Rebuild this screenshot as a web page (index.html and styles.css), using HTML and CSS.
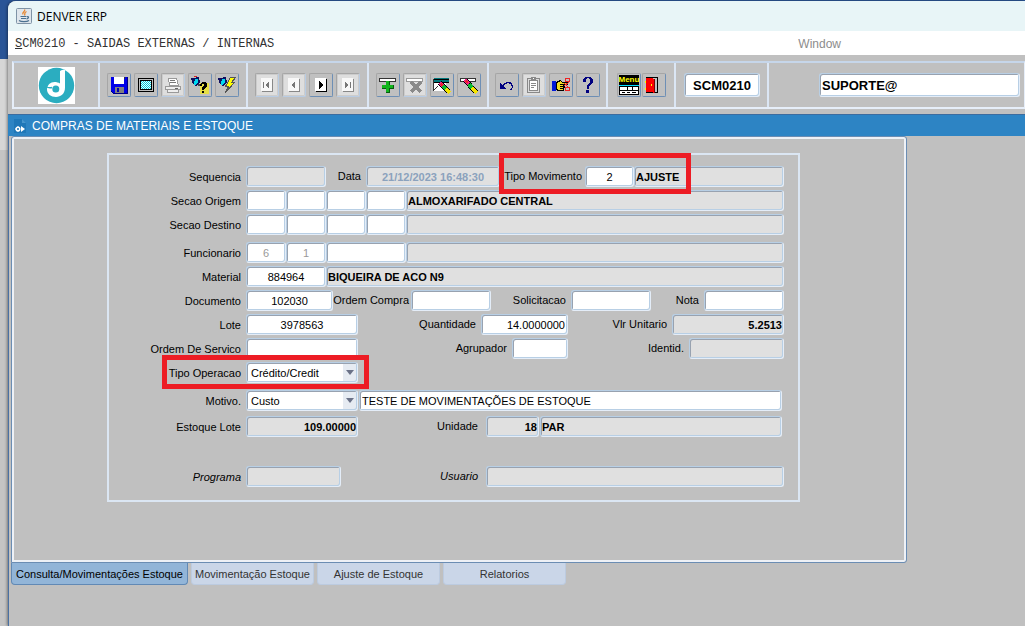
FILE: index.html
```html
<!DOCTYPE html>
<html lang="pt-BR">
<head>
    <meta charset="UTF-8">
    <meta name="viewport" content="width=device-width, initial-scale=1.0">
    <title>DENVER ERP</title>
    <link rel="stylesheet" href="styles.css">
</head>
<body>

    <div class="window">
        <header class="titlebar">
            <svg class="java" width="16" height="16" viewBox="0 0 16 16">
                <rect x="0.5" y="0.5" width="15" height="15" rx="1" fill="#dfe6ec" stroke="#7e93a6"/>
                <path d="M8.5 1.5c1.500 2-3 2.500-1.500 5M10.500 3.500c-3 1.500-1 2-2 4" fill="none" stroke="#e8862d" stroke-width="1.300"/>
                <path d="M4.500 8.500h6M5 10.500h5M11 8.500c2.500 0 1.500 2-.5 2.500M3 12.500c2 1.500 8 1.500 10 0" fill="none" stroke="#4b7190" stroke-width="1.200"/>
            </svg>
            <span>DENVER ERP</span>
        </header>

        <nav class="menubar">
            <a href="#"><u>S</u>CM0210 - SAIDAS EXTERNAS / INTERNAS</a>
            <a href="#" class="menu-window">Window</a>
        </nav>

        <div class="toolbar">
            <div class="seg seg-logo">
                <svg width="37" height="37" viewBox="0 0 37 37">
                    <rect width="37" height="37" fill="#fff"/>
                    <circle cx="18.500" cy="18.500" r="17.700" fill="#2badc0"/>
                    <path d="M22 4q3-2 5-1v17.500c0 6-4 9.500-9 9.500s-9-3-9-7.500c0-4.500 3.500-7.500 7.500-7.500 2 0 4 .5 5.500 1.500z" fill="#fff"/>
                    <ellipse cx="17.800" cy="22" rx="3.500" ry="3.500" fill="#2badc0"/>
                    <path d="M8 19.500q3 2 6 1" fill="none" stroke="#2badc0" stroke-width="1.500"/>
                </svg>
            </div>
            <div class="seg seg-file">
                <button class="tool" aria-label="Salvar">
                    <svg viewBox="0 0 18 18">
                        <path d="M1 1h16v16H3l-2-2z" fill="#0000e8"/>
                        <path d="M1 15l2 2h14V1" fill="none" stroke="#000080"/>
                        <path d="M4 1h10v7H4z" fill="#fff"/>
                        <path d="M14 1h1v2h-1z" fill="#333"/>
                        <path d="M5 11h9v6H5z" fill="#808080"/>
                        <path d="M7 12h2v4H7z" fill="#0000b0"/>
                    </svg>
                </button>
                <button class="tool" aria-label="Tela">
                    <svg viewBox="0 0 18 18">
                        <rect x="1.500" y="2.500" width="15" height="13" rx="1" fill="#c0c0c0" stroke="#000"/>
                        <rect x="3.500" y="4.500" width="11" height="9" fill="#e8ffff" stroke="#000"/>
                        <path d="M4 5.500h10M4 7.500h10M4 9.500h10M4 11.500h10" stroke="#00c8d8" stroke-dasharray="1 1"/>
                        <path d="M5 6.500h9M5 8.500h9M5 10.500h9M5 12.500h9" stroke="#00c8d8" stroke-dasharray="1 1"/>
                    </svg>
                </button>
                <button class="tool" aria-label="Imprimir" disabled>
                    <svg viewBox="0 0 18 18">
                        <path d="M4.500 2.500h8l2 7h-9z" fill="#fff" stroke="#999"/>
                        <path d="M6 4.500h5M6 6.500h6" stroke="#777"/>
                        <path d="M1.500 10.500h15v3h-15zM3.500 13.500h11v3h-11z" fill="#eee" stroke="#999"/>
                        <path d="M11 12.500h3" stroke="#666"/>
                    </svg>
                </button>
                <button class="tool" aria-label="Entrar consulta">
                    <svg viewBox="0 0 18 18">
                        <path d="M9 7h9v11H9z" fill="#e6df45"/>
                        <path d="M0 2h2l6-1 1 5-4 4-3-2z" fill="#101060"/>
                        <path d="M4 3h3v3l-3 4-1-3z" fill="#00d8f0"/>
                        <path d="M3 0h3v1H3z" fill="#d22"/>
                        <path d="M7 8h2v2H7z" fill="#444"/>
                        <path d="M9 8l2-2h3l2 2v3l-3 2v1h-2v-3l2-1V8h-2v2H9zM11 15h2v2h-2z" fill="#000"/>
                    </svg>
                </button>
                <button class="tool" aria-label="Executar consulta">
                    <svg viewBox="0 0 18 18">
                        <path d="M0 2h2l6-1 1 5-4 4-3-2z" fill="#101060"/>
                        <path d="M4 3h3v3l-3 4-1-3z" fill="#00d8f0"/>
                        <path d="M12.500 1.500h5l-4 5h3L7.500 16.500l3-6h-3z" fill="#ff0" stroke="#555"/>
                    </svg>
                </button>
            </div>
            <div class="seg seg-nav">
                <button class="tool" aria-label="Primeiro" disabled>
                    <svg viewBox="0 0 18 18">
                        <path d="M3 2h11v13H3z" fill="#f8f8f8"/><path d="M4 15.500h10.500V3" fill="none" stroke="#888"/>
                        <path d="M5 6h1v6H5zM11 6v6L7 9z" fill="#777"/>
                    </svg>
                </button>
                <button class="tool" aria-label="Anterior" disabled>
                    <svg viewBox="0 0 18 18">
                        <path d="M3 2h11v13H3z" fill="#f8f8f8"/><path d="M4 15.500h10.500V3" fill="none" stroke="#888"/>
                        <path d="M10 6v6L6 9z" fill="#777"/>
                    </svg>
                </button>
                <button class="tool" aria-label="Proximo">
                    <svg viewBox="0 0 18 18">
                        <path d="M3 2h11v13H3z" fill="#fff"/><path d="M4 15.500h10.500V3" fill="none" stroke="#000"/>
                        <path d="M7 5v8l4-4z" fill="#000"/>
                    </svg>
                </button>
                <button class="tool" aria-label="Ultimo" disabled>
                    <svg viewBox="0 0 18 18">
                        <path d="M3 2h11v13H3z" fill="#f8f8f8"/><path d="M4 15.500h10.500V3" fill="none" stroke="#888"/>
                        <path d="M6 6v6l4-3zM11 6h1v6h-1z" fill="#777"/>
                    </svg>
                </button>
            </div>
            <div class="seg seg-record">
                <button class="tool" aria-label="Inserir registro">
                    <svg viewBox="0 0 18 18">
                        <path d="M.5 2.500h16v3H.5z" fill="#fff" stroke="#333"/>
                        <path d="M7 5h4v4h4v4h-4v4H7v-4H3V9h4z" fill="#075c10"/>
                        <path d="M7 5h3v4h4v3h-4v4H7v-4H3V9h4z" fill="#12b51d"/>
                    </svg>
                </button>
                <button class="tool" aria-label="Excluir registro" disabled>
                    <svg viewBox="0 0 18 18">
                        <path d="M.5 2.500h16v3H.5z" fill="#fff" stroke="#999"/>
                        <path d="M5 6l10 10M15 6L5 16" stroke="#8a8a8a" stroke-width="3"/>
                    </svg>
                </button>
                <button class="tool" aria-label="Limpar bloco">
                    <svg viewBox="0 0 18 18">
                        <path d="M1 2h15v4H1z" fill="#00777c"/>
                        <path d="M1 3.500h15M1 6.500h15" stroke="#000"/>
                        <path d="M1 7h12v8H1z" fill="#fff"/>
                        <path d="M.5 15V3M1 14l4-4" stroke="#333"/>
                        <path d="M7 7l9 9" stroke="#000" stroke-width="5"/>
                        <path d="M7 7l4 4" stroke="#f0208a" stroke-width="3"/>
                        <path d="M10 10l3 3" stroke="#0cbc32" stroke-width="4"/>
                        <path d="M13 13l4 4" stroke="#f5e400" stroke-width="4"/>
                        <path d="M8 8l2 2" stroke="#e22" stroke-width="2"/>
                    </svg>
                </button>
                <button class="tool" aria-label="Limpar registro">
                    <svg viewBox="0 0 18 18">
                        <path d="M.5 2.500h15v3H.5z" fill="#fff" stroke="#333"/>
                        <path d="M5 4l11 12" stroke="#000" stroke-width="5"/>
                        <path d="M5 4l4 4" stroke="#f0208a" stroke-width="3"/>
                        <path d="M9 8l3 4" stroke="#0cbc32" stroke-width="4"/>
                        <path d="M12 12l5 5" stroke="#f5e400" stroke-width="4"/>
                        <path d="M6 5l2 2" stroke="#e22" stroke-width="2"/>
                    </svg>
                </button>
            </div>
            <div class="seg seg-edit">
                <button class="tool" aria-label="Desfazer">
                    <svg viewBox="0 0 18 18">
                        <path d="M4 11c3-5 8-6 10-2 1 2 0 4-2 5" fill="none" stroke="#000080" stroke-width="1.300"/>
                        <path d="M2 7v6h6z" fill="#000080"/>
                    </svg>
                </button>
                <button class="tool" aria-label="Colar" disabled>
                    <svg viewBox="0 0 18 18">
                        <rect x="2.500" y="2.500" width="12" height="14" rx="1" fill="#ddd" stroke="#888"/>
                        <path d="M4.500 4.500h8v10h-8z" fill="#fff" stroke="#888"/>
                        <path d="M6 1h5v4H6z" fill="#888"/><path d="M8 2h1v1H8z" fill="#fff"/>
                        <path d="M6 7.500h5M6 9.500h5M6 11.500h3" stroke="#888"/>
                    </svg>
                </button>
                <button class="tool" aria-label="Selecionar">
                    <svg viewBox="0 0 18 18">
                        <path d="M0 5h4v10H0z" fill="#0018d8"/>
                        <path d="M4.500 6.500l4-2 2 2h5v2h-4v1h1v2h-1v3h-5l-2-1z" fill="#f2dc22" stroke="#000"/>
                        <path d="M8 8.500h4M8 10.500h4M8 12.500h3" stroke="#000"/>
                        <path d="M12 10l5-4M12 7l5 5" stroke="#e22"/>
                        <circle cx="15.500" cy="4" r="2" fill="none" stroke="#e22"/><circle cx="15.500" cy="13" r="2" fill="none" stroke="#e22"/>
                    </svg>
                </button>
                <button class="tool" aria-label="Ajuda">
                    <svg viewBox="0 0 18 18">
                        <path d="M4 3l2-2h5l3 2v4l-4 3v3H8V9l3-2V3L9 2 7 3v3H4z" fill="#000080"/>
                        <path d="M7 14h3v3H7z" fill="#000080"/>
                    </svg>
                </button>
            </div>
            <div class="seg seg-exit">
                <button class="tool tool-menu">
                    <span>Menu</span>
                    <svg viewBox="0 0 20 10">
                        <path d="M0 0h20v10H0z"/>
                        <path d="M0 .5h20" stroke="#0df"/>
                        <path d="M1 2h18v7H1z" fill="#fff"/>
                        <path d="M8 2v3M13 2v3M1 5.500h18M3 7.500h3M8 7.500h3M13 7.500h4" stroke="#000"/>
                    </svg>
                </button>
                <button class="tool" aria-label="Sair">
                    <svg viewBox="0 0 18 18">
                        <path d="M1.500 1.500h11v15h-11z" fill="#c0c0c0" stroke="#000"/>
                        <path d="M1 2h7l1 2v13l-2-1H1z" fill="#f00"/>
                        <path d="M9.500 17V3" fill="none" stroke="#800000"/>
                        <path d="M6 8h1v2H6zM0 5h1v2H0zM0 12h1v2H0z" fill="#ff0"/>
                    </svg>
                </button>
            </div>
            <div class="seg seg-code">
                <input class="big" type="text" value="SCM0210" aria-label="Programa atual" readonly>
            </div>
            <div class="seg seg-user">
                <input class="big" type="text" value="SUPORTE@" aria-label="Usuario conectado" readonly>
            </div>
        </div>

        <h1 class="module">
            <svg width="13" height="16" viewBox="0 0 13 16">
                <path d="M0 1h8l4 4v10H0z" fill="#1f77b8"/>
                <path d="M8 1l4 4H8z" fill="#4796ce"/>
                <path d="M7 8l4 3-4 3z" fill="#fff"/>
                <circle cx="4" cy="11" r="1.800" fill="none" stroke="#fff" stroke-width="1.500"/>
                <path d="M1 11h2M4 8v2M4 12v2" stroke="#fff"/>
            </svg>
            COMPRAS DE MATERIAIS E ESTOQUE
        </h1>

        <main>
            <div class="panel">
                <form class="box">
                    <div class="group">
                        <div class="row">
                            <label class="first" for="sequencia">Sequencia</label>
                            <input class="w80 gray" type="text" id="sequencia" readonly>
                            <label class="l40" for="data">Data</label>
                            <input class="w134 gray date" type="text" id="data" value="21/12/2023 16:48:30" readonly>
                            <div class="mark mark-mov">
                                <label class="l85" for="tipomov">Tipo Movimento</label>
                                <input class="w49 center" type="text" id="tipomov" value="2">
                            </div>
                            <input class="fill gray" type="text" value="AJUSTE" aria-label="Descricao movimento" readonly>
                        </div>
                        <div class="row">
                            <label class="first" for="origem">Secao Origem</label>
                            <input class="w40" type="text" id="origem">
                            <input class="w40" type="text" aria-label="Origem 2">
                            <input class="w40" type="text" aria-label="Origem 3">
                            <input class="w40" type="text" aria-label="Origem 4">
                            <input class="fill gray" type="text" value="ALMOXARIFADO CENTRAL" aria-label="Nome origem" readonly>
                        </div>
                        <div class="row">
                            <label class="first" for="destino">Secao Destino</label>
                            <input class="w40" type="text" id="destino">
                            <input class="w40" type="text" aria-label="Destino 2">
                            <input class="w40" type="text" aria-label="Destino 3">
                            <input class="w40" type="text" aria-label="Destino 4">
                            <input class="fill gray" type="text" aria-label="Nome destino" readonly>
                        </div>
                    </div>

                    <div class="group">
                        <div class="row">
                            <label class="first" for="func">Funcionario</label>
                            <input class="w40 center off" type="text" id="func" value="6">
                            <input class="w40 center off" type="text" value="1" aria-label="Filial">
                            <input class="w80" type="text" aria-label="Matricula">
                            <input class="fill gray" type="text" aria-label="Nome funcionario" readonly>
                        </div>
                        <div class="row">
                            <label class="first" for="material">Material</label>
                            <input class="w80 center" type="text" id="material" value="884964">
                            <input class="fill gray" type="text" value="BIQUEIRA DE ACO N9" aria-label="Descricao material" readonly>
                        </div>
                        <div class="row">
                            <label class="first" for="documento">Documento</label>
                            <input class="w87 center" type="text" id="documento" value="102030">
                            <label class="l78" for="compra">Ordem Compra</label>
                            <input class="w80" type="text" id="compra">
                            <label class="fill" for="solicitacao">Solicitacao</label>
                            <input class="w80" type="text" id="solicitacao">
                            <label class="l53" for="nota">Nota</label>
                            <input class="w80" type="text" id="nota">
                        </div>
                        <div class="row">
                            <label class="first" for="lote">Lote</label>
                            <input class="w112 center" type="text" id="lote" value="3978563">
                            <label class="fill" for="quantidade">Quantidade</label>
                            <input class="w87 right" type="text" id="quantidade" value="14.0000000">
                            <label class="l104" for="unitario">Vlr Unitario</label>
                            <input class="w112 gray right" type="text" id="unitario" value="5.2513" readonly>
                        </div>
                        <div class="row">
                            <label class="first" for="servico">Ordem De Servico</label>
                            <input class="w112" type="text" id="servico">
                            <label class="fill" for="agrupador">Agrupador</label>
                            <input class="w56" type="text" id="agrupador">
                            <label class="l121" for="identid">Identid.</label>
                            <input class="w95 gray" type="text" id="identid" readonly>
                        </div>
                        <div class="row">
                            <div class="mark mark-oper">
                                <label class="first" for="operacao">Tipo Operacao</label>
                                <span class="combo">
                                    <select id="operacao"><option>Crédito/Credit</option></select>
                                </span>
                            </div>
                        </div>
                    </div>

                    <div class="group wide">
                        <div class="row">
                            <label class="first" for="motivo">Motivo.</label>
                            <span class="combo">
                                <select id="motivo"><option>Custo</option></select>
                            </span>
                            <input class="fill obs" type="text" value="TESTE DE MOVIMENTAÇÕES DE ESTOQUE" aria-label="Observacao">
                        </div>
                        <div class="row">
                            <label class="first" for="estoque">Estoque Lote</label>
                            <input class="w112 gray right" type="text" id="estoque" value="109.00000" readonly>
                            <label class="l128" for="unidade">Unidade</label>
                            <input class="w53 gray right" type="text" id="unidade" value="18" readonly>
                            <input class="fill gray unit" type="text" value="PAR" aria-label="Nome unidade" readonly>
                        </div>
                    </div>

                    <div class="group last">
                        <div class="row">
                            <label class="first" for="programa"><i>Programa</i></label>
                            <input class="w95 gray" type="text" id="programa" readonly>
                            <label class="l145" for="usuario"><i>Usuario</i></label>
                            <input class="fill gray" type="text" id="usuario" readonly>
                        </div>
                    </div>
                </form>
            </div>

            <div class="tabs">
                <button class="tab active">Consulta/Movimentações Estoque</button>
                <button class="tab">Movimentação Estoque</button>
                <button class="tab">Ajuste de Estoque</button>
                <button class="tab">Relatorios</button>
            </div>
        </main>
    </div>

</body>
</html>
```

FILE: styles.css
```css
* {
    box-sizing: border-box;
}

body {
    margin: 0;
    padding: 1px 0 0 8px;
    font-family: "Liberation Sans", Arial, sans-serif;
    font-size: 11px;
    color: #000;
    background: linear-gradient(#2a5597 0 59px, #d6d6d6 59px 150px, #c4c4c4 150px);
}

.window {
    display: flex;
    flex-direction: column;
    min-height: calc(100vh - 1px);
    background: #c0c0c0;
    border-radius: 8px 0 0 0;
    box-shadow: -1px 0 3px rgba(0, 0, 0, 0.4);
}

.titlebar {
    display: flex;
    align-items: center;
    gap: 5px;
    height: 30px;
    padding-left: 8px;
    background: #e8f5f7;
    border-radius: 8px 0 0 0;
    font-family: "Open Sans", "Noto Sans", sans-serif;
    font-size: 12px;
}

.menubar {
    display: flex;
    align-items: center;
    height: 24px;
    padding: 1px 184px 0 7px;
    background: #fff;
    font-family: "Liberation Mono", "Courier New", monospace;
    font-size: 12px;
}

.menubar a {
    color: #333;
    text-decoration: none;
}

.menubar .menu-window {
    margin-left: auto;
    color: #8c8c8c;
    font-family: "Liberation Sans", Arial, sans-serif;
}

/* toolbar */
.toolbar {
    display: flex;
    height: 48px;
    margin: 6px 0 5px 4px;
    border: 2px solid #e6eef9;
    border-top-color: #c6d6ea;
    border-right-width: 1px;
}

.seg {
    display: flex;
    align-items: center;
    justify-content: center;
    gap: 3px;
    border-right: 2px solid #dbe6f4;
}

.seg-logo { width: 86px; }
.seg-file { width: 148px; }
.seg-nav { width: 121px; }
.seg-record { width: 120px; }
.seg-edit { width: 119px; }
.seg-exit { width: 68px; gap: 1px; }
.seg-code { width: 93px; }

.seg-code {
    justify-content: flex-start;
    padding-left: 8px;
}

.seg-user {
    flex: 1;
    padding: 0 4px 0 50px;
    border-right: 0;
}

.tool {
    display: flex;
    align-items: center;
    justify-content: center;
    width: 24px;
    height: 24px;
    padding: 0;
    background: #c0c0c0;
    border: 1px solid #a6a6a6;
    border-right: 1px solid #6e8fb5;
    border-bottom: 1px solid #6e8fb5;
    border-radius: 2px;
}

.tool svg {
    width: 18px;
    height: 18px;
    shape-rendering: crispEdges;
}

.tool:disabled {
    background: #dedede;
    border-right-color: #b8cce4;
    border-bottom-color: #b8cce4;
    box-shadow: inset 0 0 0 1px #ccc;
}

.tool-menu {
    flex-direction: column;
    font-family: "Liberation Sans", Arial, sans-serif;
    font-size: 8px;
    font-weight: bold;
    line-height: 9px;
    color: #ff0;
}

.tool-menu span {
    width: 20px;
    height: 10px;
    background: #000;
    overflow: hidden;
}

.tool-menu svg {
    width: 20px;
    height: 10px;
}

/* fields */
input,
select {
    height: 21px;
    min-width: 0;
    margin: 0;
    padding: 0 2px;
    font-family: inherit;
    font-size: 11px;
    color: #000;
    background: #fff;
    border: 1px solid #b8cfe5;
    border-right-color: #e4edf8;
    border-bottom-color: #e4edf8;
    border-radius: 3px;
    box-shadow: inset 1px 1px #98a2b0, inset -1px -1px #b8cfe5;
}

input.gray {
    background: #e0e0e0;
    font-weight: bold;
    padding: 0 1px;
}

input.date {
    color: #8ba2bd;
    text-align: center;
}

input.big {
    width: 100%;
    height: 24px;
    font-size: 13px;
    font-weight: bold;
}

.seg-code input.big {
    width: 76px;
    text-align: center;
}

input.center { text-align: center; }
input.right { text-align: right; }
input.off { color: #999; }
input.obs,
input.unit { margin-right: 2px; margin-left: 1px; }

.w40 { width: 40px; }
.w49 { width: 49px; }
.w53 { width: 53px; }
.w56 { width: 56px; }
.w80 { width: 80px; }
.w87 { width: 87px; }
.w95 { width: 95px; }
.w112 { width: 112px; }
.w134 { width: 134px; }
.fill { flex: 1; }

.combo {
    position: relative;
    width: 112px;
}

.combo select {
    display: block;
    width: 100%;
    padding-left: 4px;
    appearance: none;
    background: linear-gradient(90deg, #fff 96px, #e6ebf2 96px);
}

.combo::after {
    content: "";
    position: absolute;
    top: 8px;
    right: 4px;
    border: 4px solid transparent;
    border-top: 5px solid #6b7288;
    border-bottom: 0;
    pointer-events: none;
}

/* module title */
.module {
    display: flex;
    align-items: center;
    gap: 5px;
    height: 22px;
    margin: 0;
    padding-left: 6px;
    font-size: 12px;
    font-weight: normal;
    color: #fff;
    background: #2d84c4;
    border-top: 1px solid #3c6c9f;
}

main {
    flex: 1;
    padding: 0 2px;
    border-left: 1px solid #4a71a3;
}

.panel {
    max-width: 896px;
    padding: 15px 94px 59px;
    border: 1px solid #6b8db3;
    border-radius: 3px 3px 3px 0;
    box-shadow: inset 0 0 0 2px #eef1f6;
}

.box {
    max-width: 693px;
    margin: 1px;
    padding: 11px 14px 13px 0;
    border: 2px solid #dbe6f3;
}

.group {
    display: flex;
    flex-direction: column;
    gap: 3px;
    margin-bottom: 7px;
}

.group.wide {
    gap: 5px;
    margin-bottom: 29px;
}

.group.last {
    margin-bottom: 0;
}

.row {
    display: flex;
    height: 21px;
}

.row label {
    padding: 0 5px 0 0;
    line-height: 21px;
    text-align: right;
    white-space: nowrap;
}

.row label.first {
    width: 137px;
    padding-top: 1px;
}

.row .l40 { width: 40px; }
.row .l53 { width: 53px; }
.row .l78 { width: 78px; padding-right: 2px; }
.row .l85 { width: 85px; padding-right: 3px; }
.row .l104 { width: 104px; }
.row .l121 { width: 121px; }
.row .l128 { width: 128px; padding-right: 8px; }
.row .l145 { width: 145px; padding-right: 8px; }

/* red highlight frames */
.mark {
    position: relative;
    display: flex;
}

.mark::after {
    content: "";
    position: absolute;
    z-index: 1;
    border: 5px solid #ed1c24;
    pointer-events: none;
}

.mark-mov::after {
    top: -13px;
    right: -57px;
    bottom: -7px;
    left: -1px;
}

.mark-oper::after {
    top: -7px;
    right: -11px;
    bottom: -6px;
    left: 53px;
}

/* tabs */
.tabs {
    display: flex;
    gap: 3px;
}

.tab {
    width: 123px;
    height: 22px;
    padding: 0;
    font-family: inherit;
    font-size: 11px;
    white-space: nowrap;
    color: #333;
    background: #cad6e8;
    border: 1px solid #bccbe0;
    border-top: 0;
    border-radius: 0 0 4px 4px;
}

.tab.active {
    width: 177px;
    color: #000;
    background: #92b5d8;
    border-color: #6189b5;
}
```
